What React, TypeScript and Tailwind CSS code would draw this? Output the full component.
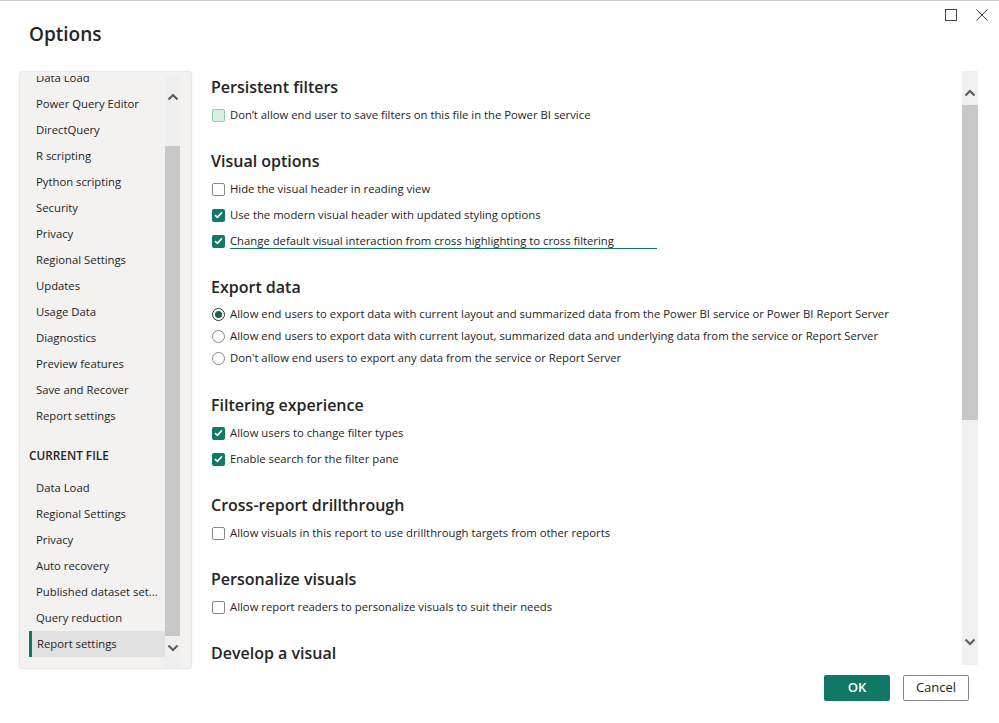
import { ReactNode } from "react";

const globalItems = [
  "Data Load",
  "Power Query Editor",
  "DirectQuery",
  "R scripting",
  "Python scripting",
  "Security",
  "Privacy",
  "Regional Settings",
  "Updates",
  "Usage Data",
  "Diagnostics",
  "Preview features",
  "Save and Recover",
  "Report settings",
];

const fileItems = [
  "Data Load",
  "Regional Settings",
  "Privacy",
  "Auto recovery",
  "Published dataset set...",
  "Query reduction",
  "Report settings",
];

function Chevron({ up }: { up?: boolean }) {
  return (
    <svg width="12" height="8" viewBox="0 0 12 8" aria-hidden="true">
      <polyline
        points={up ? "1.5,6.5 6,2 10.5,6.5" : "1.5,1.5 6,6 10.5,1.5"}
        fill="none"
        stroke="#605e5c"
        strokeWidth="2.2"
      />
    </svg>
  );
}

function Checkbox({ checked, disabled }: { checked?: boolean; disabled?: boolean }) {
  if (disabled) {
    return <span className="w-[13px] h-[13px] shrink-0 rounded-[2px] border border-[#8fcfae] bg-[#d6efe2]" />;
  }
  if (checked) {
    return (
      <span className="w-[13px] h-[13px] shrink-0 rounded-[2px] bg-[#117865] flex items-center justify-center">
        <svg width="9" height="8" viewBox="0 0 9 8" aria-hidden="true">
          <polyline points="1,4.2 3.4,6.4 8,1.4" fill="none" stroke="#ffffff" strokeWidth="1.6" />
        </svg>
      </span>
    );
  }
  return <span className="w-[13px] h-[13px] shrink-0 rounded-[2px] border border-[#8a8886] bg-white" />;
}

function CheckRow({ children, checked, disabled }: { children: ReactNode; checked?: boolean; disabled?: boolean }) {
  return (
    <div className="h-[26px] flex items-center gap-[5px] pl-px">
      <Checkbox checked={checked} disabled={disabled} />
      <span className="whitespace-nowrap">{children}</span>
    </div>
  );
}

function RadioRow({ children, selected }: { children: ReactNode; selected?: boolean }) {
  return (
    <div className="h-[22px] flex items-center gap-[5px] pl-px">
      <span
        className={
          "w-[13px] h-[13px] shrink-0 rounded-full border flex items-center justify-center bg-white " +
          (selected ? "border-[#323130]" : "border-[#8a8886]")
        }
      >
        {selected && <span className="w-[7px] h-[7px] rounded-full bg-[#1b5e52]" />}
      </span>
      <span className="whitespace-nowrap">{children}</span>
    </div>
  );
}

function Heading({ children }: { children: ReactNode }) {
  return <h2 className="h-[26px] flex items-center text-[16px] font-semibold text-[#252423] whitespace-nowrap">{children}</h2>;
}

function SideItem({ label, selected }: { label: string; selected?: boolean }) {
  if (selected) {
    return (
      <div className="h-[26px] flex items-center bg-[#e1e1e1] border-l-[3px] border-[#117865] pl-[5px] whitespace-nowrap">
        {label}
      </div>
    );
  }
  return <div className="h-[26px] flex items-center pl-[7px] whitespace-nowrap">{label}</div>;
}

export default function App() {
  return (
    <div
      className="w-[999px] h-[723px] bg-white border-t border-[#c8c8c8] flex flex-col text-[11.3px] text-[#252423] overflow-hidden"
      style={{ fontFamily: '"Open Sans", "Noto Sans", sans-serif' }}
    >
      {/* title bar */}
      <div className="h-[70px] flex justify-between">
        <h1 className="pl-[29px] pt-[20px] text-[19px] font-semibold leading-[26px]">Options</h1>
        <div className="flex items-start pt-[8px] pr-[11px] gap-[19px]">
          <svg width="12" height="12" viewBox="0 0 12 12" aria-hidden="true">
            <rect x="0.5" y="0.5" width="11" height="11" fill="none" stroke="#444" strokeWidth="1" />
          </svg>
          <svg width="12" height="12" viewBox="0 0 12 12" aria-hidden="true">
            <path d="M0.5 0.5 L11.5 11.5 M11.5 0.5 L0.5 11.5" stroke="#444" strokeWidth="1" />
          </svg>
        </div>
      </div>

      {/* body */}
      <div className="h-[598px] flex pl-[19px] gap-[19px]">
        {/* sidebar */}
        <div className="w-[173px] h-full bg-[#f3f2f1] rounded-[4px] border border-[#e9e8e7] shadow-[0_0_2px_rgba(0,0,0,0.08)] flex pt-[4px] pr-[11px]">
          <div className="w-[145px] pl-[9px] overflow-hidden">
            <div className="mt-[-11px]">
              {globalItems.map((l) => (
                <SideItem key={"g" + l} label={l} />
              ))}
              <div className="mt-[14px] mb-[6px] h-[26px] flex items-center text-[11.8px] font-semibold">CURRENT FILE</div>
              {fileItems.map((l, i) => (
                <SideItem key={"f" + l} label={l} selected={i === fileItems.length - 1} />
              ))}
            </div>
          </div>
          <div className="w-[15px] bg-[#efefef] flex flex-col items-center">
            <div className="h-[40px] w-full flex items-center justify-center pt-[2px]">
              <Chevron up />
            </div>
            <div className="w-full h-[490px] bg-[#c8c8c8] mt-[30px]" />
            <div className="h-[24px] w-full flex items-center justify-center">
              <Chevron />
            </div>
          </div>
        </div>

        {/* main */}
        <div className="w-[767px] h-[594px] flex">
          <div className="flex-1 overflow-hidden pt-[3px]">
            <Heading>Persistent filters</Heading>
            <div className="mt-[2px] mb-[20px]">
              <CheckRow disabled>Don’t allow end user to save filters on this file in the Power BI service</CheckRow>
            </div>

            <Heading>Visual options</Heading>
            <div className="mt-[2px] mb-[20px]">
              <CheckRow>Hide the visual header in reading view</CheckRow>
              <CheckRow checked>Use the modern visual header with updated styling options</CheckRow>
              <CheckRow checked>
                <span className="block w-[427px] border-b border-[#117865] pt-px leading-[14px]">
                  Change default visual interaction from cross highlighting to cross filtering
                </span>
              </CheckRow>
            </div>

            <Heading>Export data</Heading>
            <div className="mt-[3px] mb-[23px]">
              <RadioRow selected>
                Allow end users to export data with current layout and summarized data from the Power BI service or Power BI Report Server
              </RadioRow>
              <RadioRow>
                Allow end users to export data with current layout, summarized data and underlying data from the service or Report Server
              </RadioRow>
              <RadioRow>Don't allow end users to export any data from the service or Report Server</RadioRow>
            </div>

            <Heading>Filtering experience</Heading>
            <div className="mt-[2px] mb-[20px]">
              <CheckRow checked>Allow users to change filter types</CheckRow>
              <CheckRow checked>Enable search for the filter pane</CheckRow>
            </div>

            <Heading>Cross-report drillthrough</Heading>
            <div className="mt-[2px] mb-[20px]">
              <CheckRow>Allow visuals in this report to use drillthrough targets from other reports</CheckRow>
            </div>

            <Heading>Personalize visuals</Heading>
            <div className="mt-[2px] mb-[20px]">
              <CheckRow>Allow report readers to personalize visuals to suit their needs</CheckRow>
            </div>

            <Heading>Develop a visual</Heading>
          </div>
          <div className="w-[16px] h-full bg-[#f0f0f0] flex flex-col">
            <div className="h-[34px] flex items-center justify-center pt-[10px]">
              <Chevron up />
            </div>
            <div className="h-[315px] bg-[#c8c8c8]" />
            <div className="flex-1" />
            <div className="h-[34px] flex items-center justify-center pb-[12px]">
              <Chevron />
            </div>
          </div>
        </div>
      </div>

      {/* footer */}
      <div className="flex justify-end gap-[13px] pr-[30px] pt-[6px]">
        <button className="w-[66px] h-[26px] rounded-[2px] bg-[#117865] text-white text-[13px] font-semibold">OK</button>
        <button className="w-[66px] h-[26px] rounded-[2px] bg-white border border-[#8a8886] text-[13px]">Cancel</button>
      </div>
    </div>
  );
}
